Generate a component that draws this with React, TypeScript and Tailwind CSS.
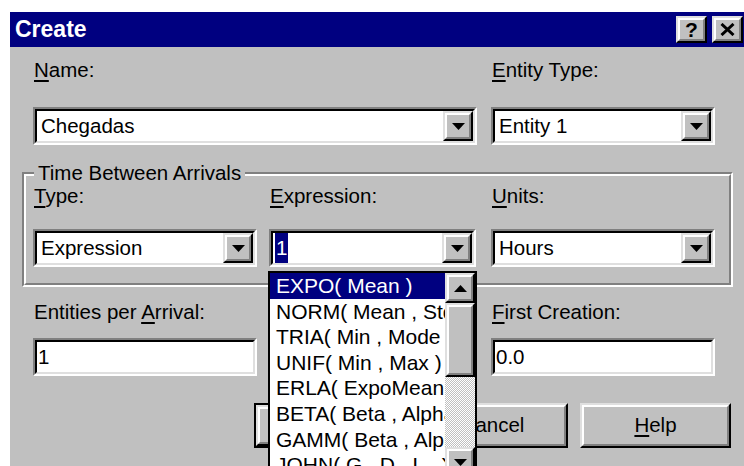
import React from "react";

const FONT = "font-['Liberation_Sans',Arial,sans-serif]";

function Raised({ className = "", children }: { className?: string; children?: React.ReactNode }) {
  return (
    <div className={`border-2 border-t-[#dfdfdf] border-l-[#dfdfdf] border-r-black border-b-black ${className}`}>
      <div className="h-full w-full border-2 border-t-white border-l-white border-r-[#808080] border-b-[#808080] bg-[#c0c0c0] flex items-center justify-center">
        {children}
      </div>
    </div>
  );
}

function Sunken({ className = "", children }: { className?: string; children?: React.ReactNode }) {
  return (
    <div className={`border-2 border-t-[#808080] border-l-[#808080] border-r-white border-b-white ${className}`}>
      <div className="h-full w-full border-2 border-t-black border-l-black border-r-[#dfdfdf] border-b-[#dfdfdf] bg-white flex items-stretch">
        {children}
      </div>
    </div>
  );
}

function DownArrow() {
  return (
    <svg width="13" height="7" viewBox="0 0 13 7">
      <path d="M0 0H13L6.5 7Z" fill="#000" />
    </svg>
  );
}

function UpArrow() {
  return (
    <svg width="13" height="7" viewBox="0 0 13 7">
      <path d="M0 7H13L6.5 0Z" fill="#000" />
    </svg>
  );
}

function Combo({ width, children }: { width: string; children?: React.ReactNode }) {
  return (
    <Sunken className={`${width} h-[38px]`}>
      <div className="flex-1 flex items-center pl-[4px] overflow-hidden whitespace-nowrap">{children}</div>
      <Raised className="w-[30px] h-full">
        <DownArrow />
      </Raised>
    </Sunken>
  );
}

function Field({ width, children }: { width: string; children?: React.ReactNode }) {
  return (
    <Sunken className={`${width} h-[38px]`}>
      <div className="flex-1 flex items-center pl-[1px] whitespace-nowrap">{children}</div>
    </Sunken>
  );
}

function Key({ children }: { children: React.ReactNode }) {
  return <span className="underline decoration-2 underline-offset-[3px]">{children}</span>;
}

function Label({ className = "", children }: { className?: string; children: React.ReactNode }) {
  return <div className={`h-[24px] leading-[24px] pl-[1px] whitespace-nowrap ${className}`}>{children}</div>;
}

const distributions = [
  "EXPO( Mean )",
  "NORM( Mean , StdDev )",
  "TRIA( Min , Mode , Max )",
  "UNIF( Min , Max )",
  "ERLA( ExpoMean , k )",
  "BETA( Beta , Alpha )",
  "GAMM( Beta , Alpha )",
  "JOHN( G , D , L , X )",
];

export default function App() {
  return (
    <div className={`w-[744px] h-[466px] overflow-hidden bg-white pl-[10px] pt-[12px] ${FONT} text-[20.5px] text-black`}>
      <div className="relative h-[454px] w-[734px] bg-[#c0c0c0] flex flex-col">
        {/* caption bar */}
        <div className="h-[35px] shrink-0 bg-[#000080] flex items-center justify-between pl-[5px] pr-[1px]">
          <span className="text-white font-bold text-[23px] leading-none">Create</span>
          <div className="flex gap-[5px]">
            <Raised className="w-[31px] h-[27px]">
              <span className="font-bold text-[21px] leading-none">?</span>
            </Raised>
            <Raised className="w-[31px] h-[27px]">
              <svg width="15" height="13" viewBox="0 0 15 13">
                <path d="M1.5 1L13.5 12M13.5 1L1.5 12" stroke="#000" strokeWidth="3" />
              </svg>
            </Raised>
          </div>
        </div>

        {/* name / entity type */}
        <div className="mt-[11px] flex pl-[23px]">
          <Label className="w-[444px]">
            <Key>N</Key>ame:
          </Label>
          <Label className="ml-[14px]">
            <Key>E</Key>ntity Type:
          </Label>
        </div>
        <div className="mt-[25px] flex pl-[23px] gap-[14px]">
          <Combo width="w-[444px]">Chegadas</Combo>
          <Combo width="w-[224px]">Entity 1</Combo>
        </div>

        {/* time between arrivals group */}
        <div className="relative mt-[27px] ml-[12px] w-[711px] h-[115px] border-2 border-t-[#808080] border-l-[#808080] border-r-white border-b-white">
          <div className="h-full border-2 border-t-white border-l-white border-r-[#808080] border-b-[#808080] pl-[7px] pt-[8px]">
            <div className="flex">
              <Label className="w-[224px]">
                <Key>T</Key>ype:
              </Label>
              <Label className="w-[207px] ml-[12px]">
                <Key>E</Key>xpression:
              </Label>
              <Label className="ml-[15px]">
                <Key>U</Key>nits:
              </Label>
            </div>
            <div className="mt-[21px] flex">
              <Combo width="w-[224px]">Expression</Combo>
              <div className="ml-[12px]">
                <Combo width="w-[207px]">
                  <span className="bg-[#000080] text-white h-[30px] leading-[30px] px-[1px] -ml-[2px]">1</span>
                </Combo>
              </div>
              <div className="ml-[15px]">
                <Combo width="w-[224px]">Hours</Combo>
              </div>
            </div>
          </div>
          <span className="absolute -top-[13px] left-[10px] px-[4px] bg-[#c0c0c0] leading-[24px] whitespace-nowrap">
            Time Between Arrivals
          </span>
        </div>

        {/* entities per arrival / first creation */}
        <div className="mt-[13px] flex pl-[23px]">
          <Label className="w-[224px]">
            Entities per <Key>A</Key>rrival:
          </Label>
          <Label className="ml-[234px]">
            <Key>F</Key>irst Creation:
          </Label>
        </div>
        <div className="mt-[14px] flex pl-[23px]">
          <Field width="w-[224px]">1</Field>
          <div className="ml-[234px]">
            <Field width="w-[224px]">0.0</Field>
          </div>
        </div>

        {/* dialog buttons */}
        <div className="mt-[27px] flex pl-[244px] gap-[12px]">
          <div className="border-2 border-black">
            <Raised className="w-[147px] h-[41px]">OK</Raised>
          </div>
          <Raised className="w-[151px] h-[45px]">Cancel</Raised>
          <Raised className="w-[151px] h-[45px]">
            <span>
              <Key>H</Key>elp
            </span>
          </Raised>
        </div>

        {/* open expression list */}
        <div className="absolute left-[258px] top-[259px] w-[209px] h-[215px] border-2 border-black bg-white flex text-[21px]">
          <div className="flex-1 overflow-hidden">
            {distributions.map((d, i) => (
              <div
                key={d}
                className={`h-[25.6px] leading-[25.6px] pl-[6px] whitespace-nowrap ${
                  i === 0 ? "bg-[#000080] text-white" : ""
                }`}
              >
                {d}
              </div>
            ))}
          </div>
          <div className="w-[30px] flex flex-col">
            <Raised className="w-[30px] h-[30px] shrink-0">
              <UpArrow />
            </Raised>
            <Raised className="w-[30px] h-[74px] shrink-0" />
            <div className="h-[70px] shrink-0 bg-[repeating-conic-gradient(#c0c0c0_0%_25%,#ffffff_0%_50%)] bg-[length:2px_2px]" />
            <Raised className="w-[30px] h-[30px] shrink-0">
              <DownArrow />
            </Raised>
          </div>
        </div>
      </div>
    </div>
  );
}
